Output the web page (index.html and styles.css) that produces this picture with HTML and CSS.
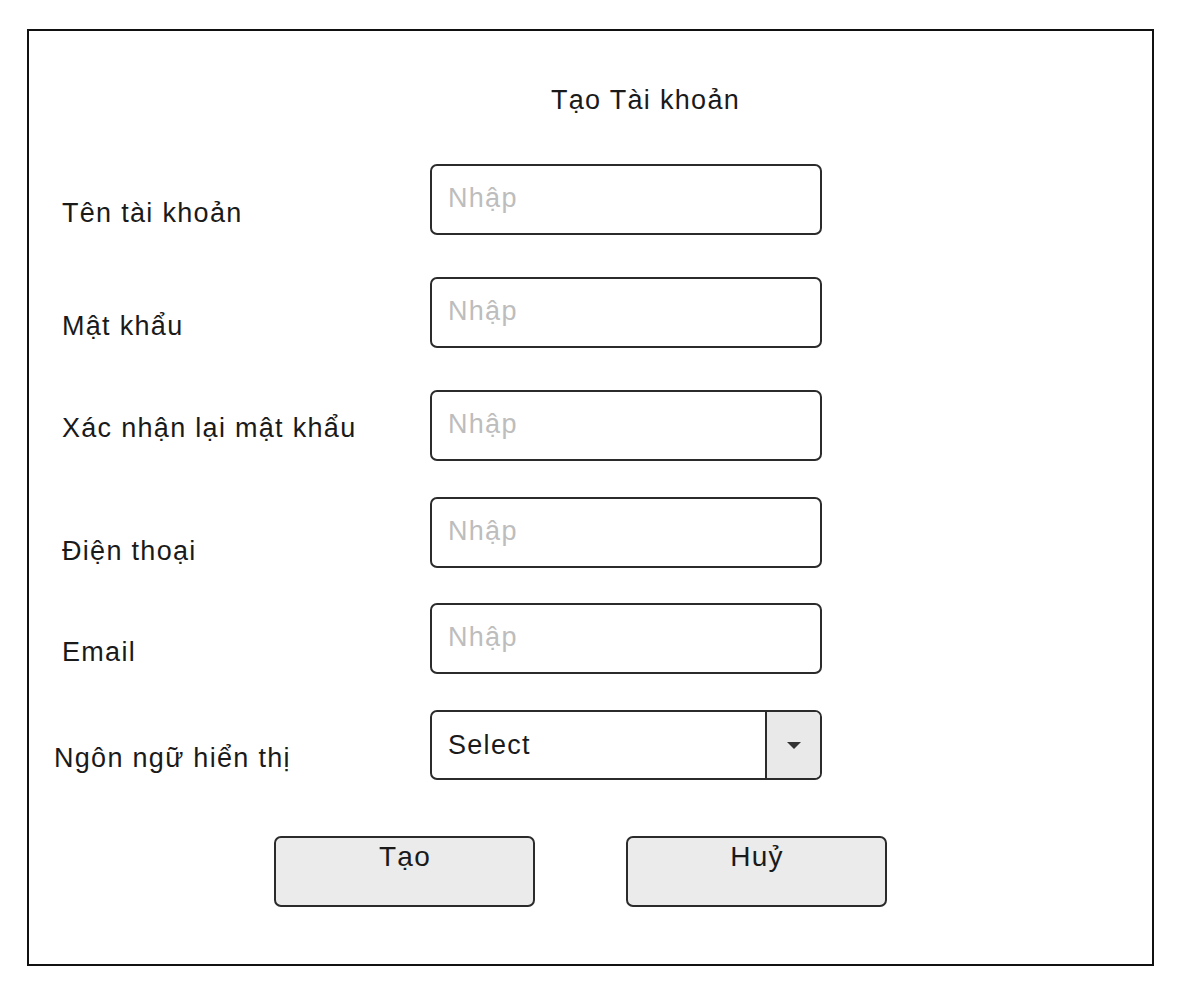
FILE: index.html
```html
<!DOCTYPE html>
<html lang="vi">
<head>
<meta charset="utf-8">
<title>Tạo Tài khoản</title>
<link rel="stylesheet" href="styles.css">
</head>
<body>
<div class="frame">
  <h1 class="title">Tạo Tài khoản</h1>
  <form class="form">
    <div class="row row--first">
      <label class="label label--a">Tên tài khoản</label>
      <input class="field" type="text" placeholder="Nhập">
    </div>
    <div class="row row--wide">
      <label class="label label--a">Mật khẩu</label>
      <input class="field" type="password" placeholder="Nhập">
    </div>
    <div class="row row--wide">
      <label class="label label--b">Xác nhận lại mật khẩu</label>
      <input class="field" type="password" placeholder="Nhập">
    </div>
    <div class="row row--narrow">
      <label class="label label--c">Điện thoại</label>
      <input class="field" type="text" placeholder="Nhập">
    </div>
    <div class="row row--narrow2">
      <label class="label label--a">Email</label>
      <input class="field" type="text" placeholder="Nhập">
    </div>
    <div class="row row--narrow">
      <label class="label label--d">Ngôn ngữ hiển thị</label>
      <div class="select">
        <span class="select__value">Select</span>
        <span class="select__btn"><span class="select__arrow"></span></span>
      </div>
    </div>
    <div class="actions">
      <button type="button" class="btn">Tạo</button>
      <button type="button" class="btn">Huỷ</button>
    </div>
  </form>
</div>
</body>
</html>
```

FILE: styles.css
```css
* { box-sizing: border-box; }

body {
  margin: 0;
  background: #ffffff;
  font-family: "Liberation Sans", Arial, sans-serif;
  color: #1a1a1a;
}

.frame {
  margin: 29px 0 0 27px;
  width: 1127px;
  height: 937px;
  border: 2px solid #111111;
}

.title {
  margin: 54px 0 0 0;
  padding-left: 522px;
  font-size: 27px;
  font-weight: normal;
  line-height: 30px;
  letter-spacing: 1.3px;
}

.form {
  margin: 0;
}

.row {
  display: flex;
  align-items: flex-start;
}

.row--first { margin-top: 49px; }
.row--wide { margin-top: 42px; }
.row--narrow { margin-top: 36px; }
.row--narrow2 { margin-top: 35px; }

.label {
  width: 401px;
  padding-left: 33px;
  font-size: 27px;
  line-height: 30px;
  letter-spacing: 1.3px;
}

.label--a { padding-top: 34px; }
.label--b { padding-top: 23px; }
.label--c { padding-top: 39px; }
.label--d { padding-top: 33px; padding-left: 25px; }

.field {
  width: 392px;
  height: 71px;
  margin: 0;
  padding: 0 16px 2px 16px;
  border: 2px solid #2b2b2b;
  border-radius: 7px;
  background: #ffffff;
  font-family: inherit;
  font-size: 27px;
  letter-spacing: 1.3px;
  color: #1a1a1a;
  outline: none;
}

.field::placeholder {
  color: #bdbdbd;
}

.select {
  display: flex;
  width: 392px;
  height: 70px;
  border: 2px solid #2b2b2b;
  border-radius: 7px;
  overflow: hidden;
}

.select__value {
  flex: 1;
  display: flex;
  align-items: center;
  padding-left: 16px;
  font-size: 27px;
  letter-spacing: 1.3px;
}

.select__btn {
  width: 55px;
  display: flex;
  align-items: center;
  justify-content: center;
  background: #e9e9e9;
  border-left: 2px solid #2b2b2b;
}

.select__arrow {
  width: 0;
  height: 0;
  border-left: 7px solid transparent;
  border-right: 7px solid transparent;
  border-top: 7px solid #333333;
}

.actions {
  display: flex;
  gap: 91px;
  margin-top: 56px;
  padding-left: 245px;
}

.btn {
  display: flex;
  justify-content: center;
  align-items: flex-start;
  width: 261px;
  height: 71px;
  margin: 0;
  padding: 4px 0 0 1px;
  border: 2px solid #2b2b2b;
  border-radius: 7px;
  background: #ebebeb;
  font-family: inherit;
  font-size: 28px;
  line-height: 30px;
  letter-spacing: 1.3px;
  color: #1a1a1a;
}
```
